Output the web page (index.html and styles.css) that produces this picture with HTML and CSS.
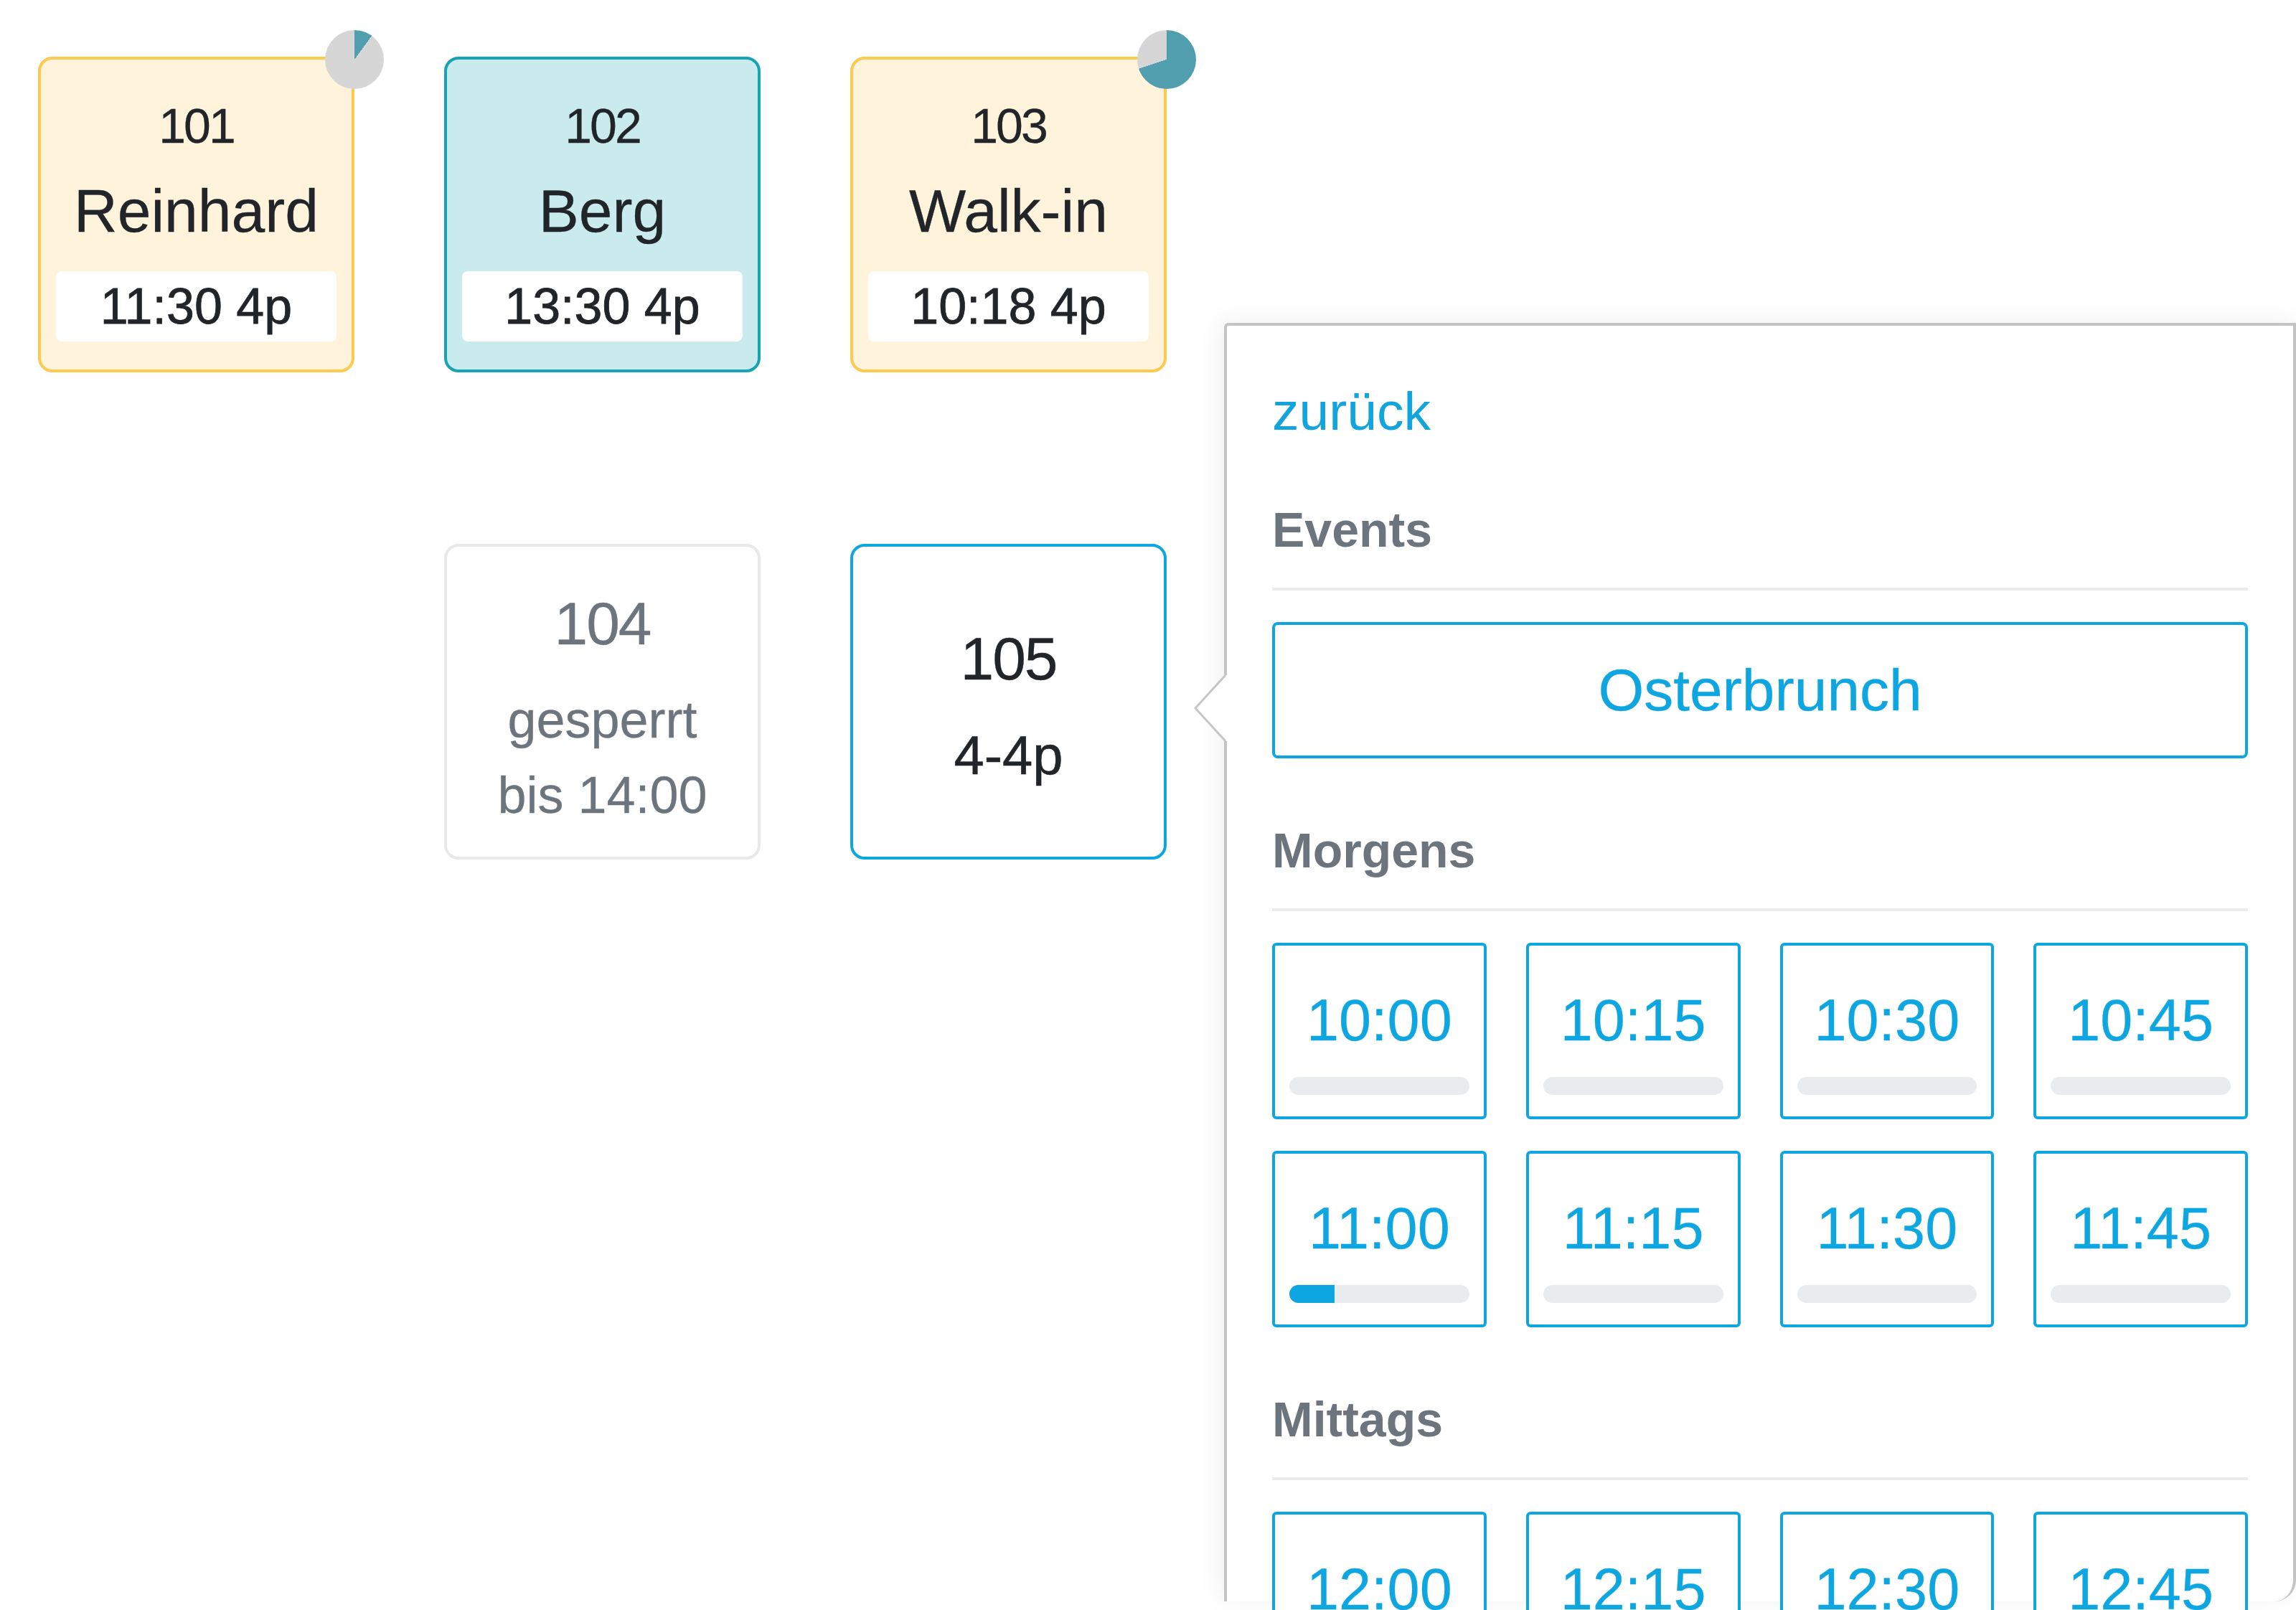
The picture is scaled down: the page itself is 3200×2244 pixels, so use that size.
FILE: index.html
```html
<!DOCTYPE html>
<html lang="de">
<head>
<meta charset="utf-8">
<title>Tischplan</title>
<link rel="stylesheet" href="styles.css">
</head>
<body>
<main class="floor">
  <div class="tables">
    <div class="table table--reserved">
      <span class="pie" style="--p:10%"></span>
      <div class="table__num">101</div>
      <div class="table__name">Reinhard</div>
      <div class="table__time">11:30 4p</div>
    </div>
    <div class="table table--seated">
      <div class="table__num">102</div>
      <div class="table__name">Berg</div>
      <div class="table__time">13:30 4p</div>
    </div>
    <div class="table table--reserved">
      <span class="pie" style="--p:70%"></span>
      <div class="table__num">103</div>
      <div class="table__name">Walk-in</div>
      <div class="table__time">10:18 4p</div>
    </div>
    <div class="table-slot-empty"></div>
    <div class="table table--blocked">
      <div class="table__num table__num--big">104</div>
      <div class="table__note table__note--first">gesperrt</div>
      <div class="table__note">bis 14:00</div>
    </div>
    <div class="table table--selected">
      <div class="table__num table__num--big">105</div>
      <div class="table__size">4-4p</div>
    </div>
  </div>

  <aside class="popover">
    <svg class="popover__arrow" width="48" height="94" viewBox="0 0 48 94">
      <polygon points="48,1 44,1 2,47 44,93 48,93" fill="#ffffff"/>
      <polyline points="44,1 2,47 44,93" fill="none" stroke="#c6c6c6" stroke-width="3"/>
    </svg>
    <a class="back" href="#">zurück</a>

    <h3 class="section-title section-title--first">Events</h3>
    <button class="event-btn" type="button">Osterbrunch</button>

    <h3 class="section-title">Morgens</h3>
    <div class="slots">
      <button class="slot" type="button"><span class="slot__time">10:00</span><span class="slot__bar"><span class="slot__fill" style="width:0%"></span></span></button>
      <button class="slot" type="button"><span class="slot__time">10:15</span><span class="slot__bar"><span class="slot__fill" style="width:0%"></span></span></button>
      <button class="slot" type="button"><span class="slot__time">10:30</span><span class="slot__bar"><span class="slot__fill" style="width:0%"></span></span></button>
      <button class="slot" type="button"><span class="slot__time">10:45</span><span class="slot__bar"><span class="slot__fill" style="width:0%"></span></span></button>
      <button class="slot" type="button"><span class="slot__time">11:00</span><span class="slot__bar"><span class="slot__fill" style="width:25%"></span></span></button>
      <button class="slot" type="button"><span class="slot__time">11:15</span><span class="slot__bar"><span class="slot__fill" style="width:0%"></span></span></button>
      <button class="slot" type="button"><span class="slot__time">11:30</span><span class="slot__bar"><span class="slot__fill" style="width:0%"></span></span></button>
      <button class="slot" type="button"><span class="slot__time">11:45</span><span class="slot__bar"><span class="slot__fill" style="width:0%"></span></span></button>
    </div>

    <h3 class="section-title">Mittags</h3>
    <div class="slots">
      <button class="slot" type="button"><span class="slot__time">12:00</span><span class="slot__bar"><span class="slot__fill" style="width:0%"></span></span></button>
      <button class="slot" type="button"><span class="slot__time">12:15</span><span class="slot__bar"><span class="slot__fill" style="width:0%"></span></span></button>
      <button class="slot" type="button"><span class="slot__time">12:30</span><span class="slot__bar"><span class="slot__fill" style="width:0%"></span></span></button>
      <button class="slot" type="button"><span class="slot__time">12:45</span><span class="slot__bar"><span class="slot__fill" style="width:0%"></span></span></button>
    </div>
  </aside>
</main>
</body>
</html>
```

FILE: styles.css
```css
html, body {
  margin: 0;
  padding: 0;
  background: #ffffff;
  overflow: hidden;
}

body {
  font-family: "Liberation Sans", Arial, "Helvetica Neue", sans-serif;
  color: #212529;
}

.floor {
  position: relative;
  width: 3200px;
  height: 2244px;
  overflow: hidden;
}

/* ---------- tables ---------- */
.tables {
  display: grid;
  grid-template-columns: repeat(3, 441px);
  grid-auto-rows: 440px;
  column-gap: 125px;
  row-gap: 239px;
  padding: 79px 0 0 53px;
}

.table {
  position: relative;
  box-sizing: border-box;
  border: 4px solid transparent;
  border-radius: 20px;
  display: flex;
  flex-direction: column;
  align-items: center;
  padding: 52px 21px 0;
  color: #212529;
  background: #ffffff;
}

.table--reserved {
  background: #fff3dc;
  border-color: #fdc951;
}

.table--seated {
  background: #c9ebee;
  border-color: #16a3b3;
}

.table--blocked {
  border-color: #e9e9e9;
  color: #6c757d;
  padding-top: 59px;
}

.table--selected {
  border-color: #0da6e0;
  padding-top: 108px;
}

.table__num {
  font-size: 68px;
  line-height: 80px;
  letter-spacing: -3px;
  -webkit-text-stroke: 0.3px currentColor;
}

.table__num--big {
  font-size: 84px;
  line-height: 96px;
  letter-spacing: -2px;
}

.table__name {
  margin-top: 31px;
  font-size: 84px;
  line-height: 96px;
  -webkit-text-stroke: 0.3px currentColor;
}

.table__time {
  margin-top: 36px;
  align-self: stretch;
  height: 98px;
  border-radius: 8px;
  background: #ffffff;
  display: flex;
  align-items: center;
  justify-content: center;
  font-size: 70px;
  -webkit-text-stroke: 0.8px #212529;
}

.table__note {
  font-size: 72px;
  line-height: 105px;
  -webkit-text-stroke: 0.3px currentColor;
}

.table__note--first {
  margin-top: 34px;
}

.table__size {
  margin-top: 43px;
  font-size: 76px;
  line-height: 88px;
  -webkit-text-stroke: 0.6px #212529;
}

.pie {
  position: absolute;
  top: -41px;
  right: -45px;
  width: 82px;
  height: 82px;
  border-radius: 50%;
  background: conic-gradient(#519fae 0 var(--p), #d6d6d6 var(--p) 100%);
}

/* ---------- popover ---------- */
.popover {
  position: absolute;
  left: 1706px;
  top: 450px;
  width: 1494px;
  height: 1782px;
  box-sizing: border-box;
  padding: 75px 63px 0;
  background: #ffffff;
  border: 4px solid #c4c4c4;
  border-bottom: 0;
  border-radius: 6px 0 30px 0;
  box-shadow: -6px -4px 36px rgba(0, 0, 0, 0.06);
}

.popover__arrow {
  position: absolute;
  left: -46px;
  top: 486px;
  display: block;
}

.back {
  display: block;
  font-size: 75px;
  line-height: 88px;
  color: #12a5dd;
  text-decoration: none;
}

.section-title {
  margin: 88px 0 0;
  padding-bottom: 41px;
  border-bottom: 4px solid #ebebeb;
  font-size: 68px;
  line-height: 80px;
  font-weight: 700;
  color: #6c757d;
}

.section-title--first {
  margin-top: 81px;
}

.event-btn {
  margin-top: 44px;
  display: flex;
  align-items: center;
  justify-content: center;
  width: 100%;
  height: 190px;
  box-sizing: border-box;
  border: 4px solid #0da6e0;
  border-radius: 8px;
  background: #ffffff;
  color: #0da6e0;
  font-family: inherit;
  font-size: 82px;
  padding: 0;
  -webkit-text-stroke: 0.3px #0da6e0;
}

.slots {
  margin-top: 44px;
  display: grid;
  grid-template-columns: repeat(4, 1fr);
  column-gap: 55px;
  row-gap: 44px;
}

.slot {
  display: flex;
  flex-direction: column;
  align-items: stretch;
  box-sizing: border-box;
  height: 246px;
  margin: 0;
  padding: 56px 20px 0;
  border: 4px solid #0da6e0;
  border-radius: 6px;
  background: #ffffff;
  font-family: inherit;
  text-align: center;
}

.slot__time {
  display: block;
  font-size: 81px;
  line-height: 96px;
  color: #0da6e0;
  -webkit-text-stroke: 0.3px #0da6e0;
}

.slot__bar {
  display: block;
  margin-top: 31px;
  height: 25px;
  border-radius: 13px;
  background: #e9ecef;
  overflow: hidden;
}

.slot__fill {
  display: block;
  height: 100%;
  background: #0da6e0;
}
```
